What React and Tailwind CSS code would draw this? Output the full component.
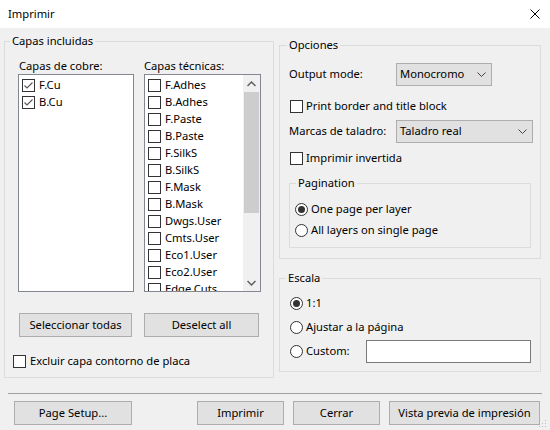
import { useState } from "react";

const techLayers = [
  "F.Adhes",
  "B.Adhes",
  "F.Paste",
  "B.Paste",
  "F.SilkS",
  "B.SilkS",
  "F.Mask",
  "B.Mask",
  "Dwgs.User",
  "Cmts.User",
  "Eco1.User",
  "Eco2.User",
  "Edge.Cuts",
];

const Check = ({ checked }) => (
  <span className="w-[13px] h-[13px] shrink-0 border border-[#333333] bg-white flex items-center justify-center">
    {checked && (
      <svg width="11" height="11" viewBox="0 0 11 11">
        <path d="M1.5 5.5 L4 8 L9.5 2.5" fill="none" stroke="#555555" strokeWidth="1.1" />
      </svg>
    )}
  </span>
);

const Radio = ({ on }) => (
  <span className="w-[13px] h-[13px] shrink-0 rounded-full border border-[#333333] bg-white flex items-center justify-center">
    {on && <span className="w-[7px] h-[7px] rounded-full bg-[#333333]" />}
  </span>
);

const Chevron = () => (
  <svg width="9" height="5" viewBox="0 0 9 5">
    <path d="M0.5 0.5 L4.5 4.5 L8.5 0.5" fill="none" stroke="#444444" strokeWidth="1" />
  </svg>
);

const Button = ({ children, className = "" }) => (
  <button
    className={
      "h-[24px] bg-[#e1e1e1] border border-[#adadad] flex items-center justify-center leading-none " +
      className
    }
  >
    {children}
  </button>
);

const Group = ({ title, legendClass = "ml-[7px]", className = "", children }) => (
  <fieldset className={"border border-[#dcdcdc] min-w-0 " + className}>
    <legend className={"px-[2px] leading-[16px] " + legendClass}>{title}</legend>
    {children}
  </fieldset>
);

const Select = ({ value, className = "" }) => (
  <div
    className={
      "h-[23px] bg-[#e1e1e1] border border-[#adadad] flex items-center justify-between pl-[3px] pr-[5px] " +
      className
    }
  >
    <span>{value}</span>
    <Chevron />
  </div>
);

const App = () => {
  const [copper, setCopper] = useState({ "F.Cu": true, "B.Cu": true });

  return (
    <div className="w-[550px] h-[430px] bg-[#f0f0f0] flex flex-col text-[11.2px] text-black font-['Noto_Sans',sans-serif] relative overflow-hidden">
      {/* title bar */}
      <div className="h-[28px] bg-white flex items-center justify-between pl-[8px] pr-[10px] shrink-0">
        <span className="leading-none">Imprimir</span>
        <svg width="10" height="10" viewBox="0 0 10 10">
          <path d="M0.5 0.5 L9.5 9.5 M9.5 0.5 L0.5 9.5" stroke="#000" strokeWidth="1" />
        </svg>
      </div>

      <div className="flex items-start pl-[4px] pt-[5px] gap-[5px]">
        {/* left group */}
        <Group title="Capas incluidas" legendClass="ml-[5px]" className="w-[270px] h-[345px]">
          <div className="flex pl-[13px] gap-[10px] pt-[9px]">
            <div className="w-[116px]">
              <div className="leading-[16px] pl-[1px]">Capas de cobre:</div>
              <div className="h-[218px] bg-white border border-[#828790] pt-[2px] pl-[3px]">
                {["F.Cu", "B.Cu"].map((n) => (
                  <div
                    key={n}
                    className="h-[17px] flex items-center gap-[4px]"
                    onClick={() => setCopper((p) => ({ ...p, [n]: !p[n] }))}
                  >
                    <Check checked={copper[n]} />
                    <span>{n}</span>
                  </div>
                ))}
              </div>
            </div>
            <div className="w-[117px]">
              <div className="leading-[16px]">Capas técnicas:</div>
              <div className="h-[218px] bg-white border border-[#828790] flex overflow-hidden">
                <div className="flex-1 pt-[2px] pl-[3px] overflow-hidden">
                  {techLayers.map((n) => (
                    <div key={n} className="h-[17px] flex items-center gap-[4px]">
                      <Check />
                      <span className="whitespace-nowrap">{n}</span>
                    </div>
                  ))}
                </div>
                <div className="w-[17px] bg-[#f0f0f0] flex flex-col items-center">
                  <div className="h-[17px] flex items-center justify-center">
                    <svg width="9" height="6" viewBox="0 0 9 6">
                      <path d="M0.5 5 L4.5 1 L8.5 5" fill="none" stroke="#606060" strokeWidth="1.5" />
                    </svg>
                  </div>
                  <div className="w-[15px] h-[121px] bg-[#cdcdcd]" />
                  <div className="flex-1" />
                  <div className="h-[17px] flex items-center justify-center">
                    <svg width="9" height="6" viewBox="0 0 9 6">
                      <path d="M0.5 1 L4.5 5 L8.5 1" fill="none" stroke="#606060" strokeWidth="1.5" />
                    </svg>
                  </div>
                </div>
              </div>
            </div>
          </div>

          <div className="flex pl-[14px] gap-[12px] mt-[21px]">
            <Button className="w-[113px]">Seleccionar todas</Button>
            <Button className="w-[115px]">Deselect all</Button>
          </div>

          <div className="h-[17px] flex items-center gap-[4px] pl-[8px] mt-[16px]">
            <Check />
            <span>Excluir capa contorno de placa</span>
          </div>
        </Group>

        {/* right column */}
        <div className="w-[262px] flex flex-col">
          <Group title="Opciones" className="h-[222px] mt-[4px]">
            <div className="h-[23px] flex items-center pl-[9px] mt-[10px]">
              <span className="w-[107px]">Output mode:</span>
              <Select value="Monocromo" className="w-[96px]" />
            </div>
            <div className="h-[17px] flex items-center gap-[3px] pl-[10px] mt-[12px]">
              <Check />
              <span>Print border and title block</span>
            </div>
            <div className="h-[23px] flex items-center pl-[9px] mt-[5px]">
              <span className="w-[107px]">Marcas de taladro:</span>
              <Select value="Taladro real" className="w-[137px]" />
            </div>
            <div className="h-[17px] flex items-center gap-[3px] pl-[10px] mt-[7px]">
              <Check />
              <span>Imprimir invertida</span>
            </div>
            <Group title="Pagination" legendClass="ml-[6px]" className="ml-[9px] w-[242px] h-[73px] mt-[8px]">
              <div className="pl-[5px] mt-[8px]">
                <div className="h-[21px] flex items-center gap-[3px]">
                  <Radio on />
                  <span>One page per layer</span>
                </div>
                <div className="h-[21px] flex items-center gap-[3px]">
                  <Radio />
                  <span>All layers on single page</span>
                </div>
              </div>
            </Group>
          </Group>

          <Group title="Escala" legendClass="ml-[6px]" className="h-[102px] mt-[11px]">
            <div className="pl-[10px] mt-[5px]">
              <div className="h-[24px] flex items-center gap-[3px]">
                <Radio on />
                <span>1:1</span>
              </div>
              <div className="h-[24px] flex items-center gap-[3px]">
                <Radio />
                <span>Ajustar a la página</span>
              </div>
              <div className="h-[24px] flex items-center">
                <Radio />
                <span className="w-[63px] pl-[3px]">Custom:</span>
                <input className="w-[165px] h-[23px] bg-white border border-[#7a7a7a] outline-none" />
              </div>
            </div>
          </Group>
        </div>
      </div>

      {/* separator + dialog buttons */}
      <div className="mx-[8px] mt-[15px] h-[1px] bg-[#a0a0a0]" />
      <div className="flex mt-[7px] pl-[14px]">
        <Button className="w-[118px]">Page Setup...</Button>
        <Button className="w-[87px] ml-[65px]">Imprimir</Button>
        <Button className="w-[87px] ml-[9px]">Cerrar</Button>
        <Button className="w-[151px] ml-[9px]">Vista previa de impresión</Button>
      </div>

      {/* size grip */}
      <svg className="absolute right-[3px] bottom-[2px]" width="8" height="8" viewBox="0 0 8 8">
        <rect x="6" y="0" width="1" height="1" fill="#bcbcbc" />
        <rect x="3" y="3" width="1" height="1" fill="#bcbcbc" />
        <rect x="6" y="3" width="1" height="1" fill="#bcbcbc" />
        <rect x="0" y="6" width="1" height="1" fill="#bcbcbc" />
        <rect x="3" y="6" width="1" height="1" fill="#bcbcbc" />
        <rect x="6" y="6" width="1" height="1" fill="#bcbcbc" />
      </svg>
    </div>
  );
};

export default App;
